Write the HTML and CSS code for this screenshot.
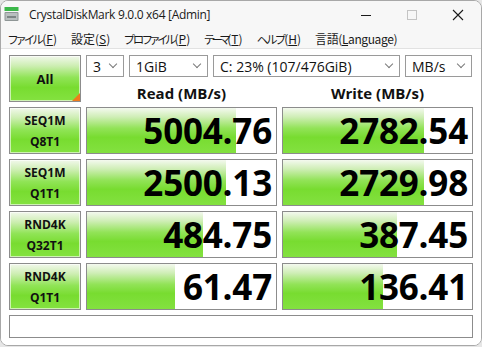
FILE: index.html
```html
<!DOCTYPE html>
<html lang="ja">
<head>
<meta charset="utf-8">
<title>CrystalDiskMark</title>
<link rel="stylesheet" href="styles.css">
</head>
<body>
<div class="window">
  <div class="titlebar">
    <svg class="app-icon" width="15" height="15" viewBox="0 0 15 15">
      <rect x="0.5" y="0" width="14" height="4" fill="#3cb84a"/>
      <rect x="0.5" y="5" width="14" height="9" rx="1" fill="#8f9696"/>
      <rect x="1.5" y="6" width="12" height="7" fill="#b9bfbf"/>
      <rect x="3" y="9" width="9" height="2" fill="#7d8585"/>
    </svg>
    <span class="title">CrystalDiskMark 9.0.0 x64 [Admin]</span>
    <div class="controls">
      <svg class="ctl min" width="12" height="12" viewBox="0 0 12 12"><line x1="1" y1="6.5" x2="11" y2="6.5" stroke="#1a1a1a" stroke-width="1"/></svg>
      <svg class="ctl max" width="12" height="12" viewBox="0 0 12 12"><rect x="1.5" y="1.5" width="9" height="9" fill="none" stroke="#c4c4c4" stroke-width="1"/></svg>
      <svg class="ctl close" width="12" height="12" viewBox="0 0 12 12"><path d="M1 1 L11 11 M11 1 L1 11" stroke="#1a1a1a" stroke-width="1.1" fill="none"/></svg>
    </div>
  </div>
  <div class="menubar">
    <span class="menu-item"><span class="kana k1">ファイル</span>(<u>F</u>)</span>
    <span class="menu-item">設定(<u>S</u>)</span>
    <span class="menu-item"><span class="kana k2">プロファイル</span>(<u>P</u>)</span>
    <span class="menu-item"><span class="kana k3">テーマ</span>(<u>T</u>)</span>
    <span class="menu-item"><span class="kana k4">ヘルプ</span>(<u>H</u>)</span>
    <span class="menu-item lang">言語(<u>L</u>anguage)</span>
  </div>
  <div class="content">
    <div class="grid">
      <div class="btn all">All<span class="corner"></span></div>
      <div class="top">
        <div class="selects">
          <div class="select s-count"><span>3</span><i class="chev"></i></div>
          <div class="select s-size"><span>1GiB</span><i class="chev"></i></div>
          <div class="select s-drive"><span>C: 23% (107/476GiB)</span><i class="chev"></i></div>
          <div class="select s-unit"><span>MB/s</span><i class="chev"></i></div>
        </div>
        <div class="heads">
          <div class="head">Read (MB/s)</div>
          <div class="head">Write (MB/s)</div>
        </div>
      </div>

      <div class="btn test">SEQ1M<br>Q8T1</div>
      <div class="result" style="--w:149px">5004.76</div>
      <div class="result" style="--w:141px">2782.54</div>

      <div class="btn test">SEQ1M<br>Q1T1</div>
      <div class="result" style="--w:139px">2500.13</div>
      <div class="result" style="--w:141px">2729.98</div>

      <div class="btn test">RND4K<br>Q32T1</div>
      <div class="result" style="--w:116px">484.75</div>
      <div class="result" style="--w:114px">387.45</div>

      <div class="btn test">RND4K<br>Q1T1</div>
      <div class="result" style="--w:88px">61.47</div>
      <div class="result" style="--w:100px">136.41</div>
    </div>
    <div class="comment"></div>
  </div>
</div>
</body>
</html>
```
FILE: styles.css
```css
html, body {
  margin: 0;
  padding: 0;
}
body {
  background: #e6e6e6;
  font-family: "Open Sans", "Noto Sans CJK JP", sans-serif;
  color: #000;
}
.window {
  width: 482px;
  height: 346px;
  box-sizing: border-box;
  border: 1px solid #a8a8a8;
  border-radius: 8px;
  background: #ffffff;
  overflow: hidden;
  display: flex;
  flex-direction: column;
}
.titlebar {
  height: 27px;
  display: flex;
  align-items: center;
  background: #f7f7f7;
  padding-left: 3px;
}
.app-icon {
  display: block;
  margin-top: -1px;
}
.title {
  margin-left: 10px;
  font-family: "Open Sans", sans-serif;
  font-size: 12px;
  color: #1a1a1a;
  letter-spacing: -0.3px;
}
.controls {
  margin-left: auto;
  display: flex;
  align-items: center;
  gap: 34px;
  padding-right: 17px;
}
.ctl {
  display: block;
}
.menubar {
  height: 20px;
  display: flex;
  align-items: center;
  gap: 14px;
  padding-left: 7px;
  background: #f7f7f7;
  border-bottom: 1px solid #e2e2e2;
  font-family: "Noto Sans CJK JP", sans-serif;
  font-feature-settings: "palt";
  font-size: 12px;
  color: #1a1a1a;
  white-space: nowrap;
}
.menu-item u {
  text-underline-offset: 1px;
}
.kana {
  font-size: 11.5px;
}
.k1 { letter-spacing: -1.4px; }
.k2 { letter-spacing: -1.9px; }
.k3 { letter-spacing: -3px; }
.k4 { letter-spacing: -1.8px; }
.lang {
  letter-spacing: -0.4px;
}
.content {
  flex: 1;
  background: #ffffff;
  padding: 6px 8px 0 8px;
}
.grid {
  display: grid;
  grid-template-columns: 72px 191px 191px;
  grid-template-rows: repeat(5, 47px);
  column-gap: 5px;
  row-gap: 5px;
}
.btn {
  box-sizing: border-box;
  border: 1px solid #8c8c8c;
  box-shadow: inset 0 0 0 1px rgba(255,255,255,0.6);
  background: linear-gradient(to bottom, #f2f8ec 0%, #cdeeb2 22%, #90e456 48%, #78dc30 70%, #84e240 100%);
  display: flex;
  align-items: center;
  justify-content: center;
  text-align: center;
  font-weight: 700;
  color: #111;
  position: relative;
}
.btn.all {
  font-size: 13px;
}
.btn.test {
  font-size: 12px;
  line-height: 21px;
  padding-top: 1px;
}
.corner {
  position: absolute;
  right: 0;
  bottom: 0;
  width: 0;
  height: 0;
  border-left: 8px solid transparent;
  border-bottom: 8px solid #ef7b1c;
}
.top {
  grid-column: 2 / 4;
  display: flex;
  flex-direction: column;
}
.selects {
  display: flex;
  gap: 5px;
  height: 22px;
}
.select {
  box-sizing: border-box;
  height: 22px;
  border: 1px solid #9a9a9a;
  background: #fff;
  display: flex;
  align-items: center;
  padding-left: 6px;
  padding-right: 6px;
  font-size: 14px;
  color: #111;
  white-space: nowrap;
}
.select span {
  flex: 1;
}
.s-count { width: 38px; }
.s-size { width: 79px; }
.s-drive { width: 187px; }
.s-unit { width: 67px; }
.chev {
  width: 5px;
  height: 5px;
  border-right: 1px solid #7a7a7a;
  border-bottom: 1px solid #7a7a7a;
  transform: rotate(45deg);
  margin-top: -4px;
  margin-right: 1px;
}
.heads {
  display: grid;
  grid-template-columns: 191px 191px;
  column-gap: 5px;
  padding-top: 6px;
}
.head {
  text-align: center;
  font-weight: 700;
  font-size: 15px;
  line-height: 20px;
  color: #111;
}
.result {
  box-sizing: border-box;
  border: 1px solid #8c8c8c;
  background-color: #fff;
  background-image: linear-gradient(to bottom, #f4f9ef 0%, #cfeeb6 20%, #92e358 45%, #78dc30 65%, #83e140 100%);
  background-repeat: no-repeat;
  background-size: var(--w) 100%;
  text-align: right;
  padding-right: 4px;
  font-weight: 700;
  font-size: 35px;
  line-height: 45px;
  letter-spacing: -0.2px;
  color: #000;
}
.comment {
  margin-top: 5px;
  height: 23px;
  box-sizing: border-box;
  border: 1px solid #8c8c8c;
  background: #fff;
}
```
